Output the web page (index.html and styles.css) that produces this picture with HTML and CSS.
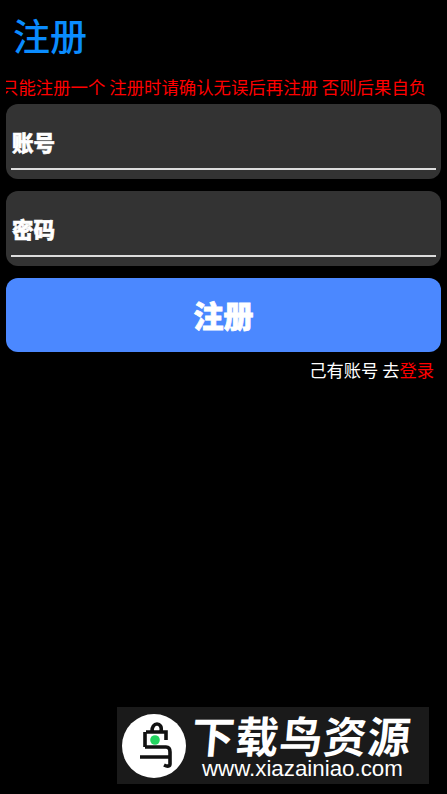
FILE: index.html
```html
<!DOCTYPE html>
<html lang="zh-CN">
<head>
<meta charset="utf-8">
<title>注册</title>
<link rel="stylesheet" href="styles.css">
</head>
<body>
<main class="page">
  <h1 class="title">注册</h1>
  <div class="notice"><p class="notice-text">只能注册一个 注册时请确认无误后再注册 否则后果自负</p></div>
  <label class="field"><span class="field-label">账号</span><span class="field-line"></span></label>
  <label class="field"><span class="field-label">密码</span><span class="field-line"></span></label>
  <button class="submit" type="button">注册</button>
  <p class="login-row">己有账号 去<a class="login-link">登录</a></p>
</main>
<aside class="watermark">
  <svg class="wm-logo" viewBox="0 0 64 64" aria-hidden="true">
    <circle cx="32" cy="32" r="32" fill="#fff"/>
    <path d="M30 17c0-4 2-7 5-7s5 3 4 7M24 18h20v8M23 18v15M23 33h21c3 0 4 2 4 5v12c0 2-2 3-6 1M18 43h29" fill="none" stroke="#111" stroke-width="3.600"/>
    <circle cx="33" cy="26" r="4.800" fill="#22d45f"/>
  </svg>
  <div class="wm-text">
    <div class="wm-name">下载鸟资源</div>
    <div class="wm-url">www.xiazainiao.com</div>
  </div>
</aside>
</body>
</html>
```
FILE: styles.css
```css
* { box-sizing: border-box; }
html, body { margin: 0; height: 100%; }
body {
  background: #000;
  font-family: "Noto Sans CJK SC", "Liberation Sans", sans-serif;
  overflow: hidden;
  position: relative;
}
.page { padding: 0 6px; }
.title {
  margin: 0;
  padding: 11px 0 0 7px;
  height: 70px;
  font-size: 37px;
  line-height: 48px;
  font-weight: 500;
  color: #0a8cff;
}
.notice { height: 34px; overflow: hidden; }
.notice-text {
  margin: 0 0 0 -5px;
  white-space: nowrap;
  font-size: 17.400px;
  line-height: 33px;
  color: #f00;
}
.field {
  display: flex;
  flex-direction: column;
  justify-content: flex-end;
  height: 75px;
  margin-bottom: 12px;
  padding: 0 5px 9px;
  background: #333;
  border-radius: 12px;
}
.field-label {
  font-size: 21.500px;
  line-height: 30px;
  font-weight: 900;
  color: #fff;
  -webkit-text-stroke: 0.6px #fff;
  margin: 0 0 11px 1px;
}
.field-line { display: block; height: 2px; background: #ddd; }
.submit {
  display: block;
  width: 100%;
  height: 74px;
  padding: 0 0 3px;
  border: 0;
  border-radius: 12px;
  background: #4b88ff;
  color: #fff;
  font-family: inherit;
  font-size: 30px;
  font-weight: 900;
  -webkit-text-stroke: 0.8px #fff;
}
.login-row {
  margin: 5px 0 0;
  padding-right: 7px;
  text-align: right;
  font-size: 17.300px;
  line-height: 26px;
  color: #fff;
}
.login-link { color: #f00; }
.watermark {
  position: absolute;
  left: 117px;
  top: 707px;
  width: 312px;
  height: 77px;
  background: #1a1a1a;
  display: flex;
  align-items: center;
  padding-left: 5px;
  color: #fff;
}
.wm-logo { width: 64px; height: 64px; flex: none; }
.wm-text { margin-left: 4px; }
.wm-name {
  font-size: 43px;
  line-height: 42px;
  font-weight: 700;
  letter-spacing: 1px;
  white-space: nowrap;
  transform: skewX(-5deg);
  transform-origin: left bottom;
  margin-top: -1px;
}
.wm-url {
  font-family: "Liberation Sans", sans-serif;
  font-size: 22.300px;
  line-height: 24px;
  margin: 2px 0 -3px 12px;
  white-space: nowrap;
}
```
